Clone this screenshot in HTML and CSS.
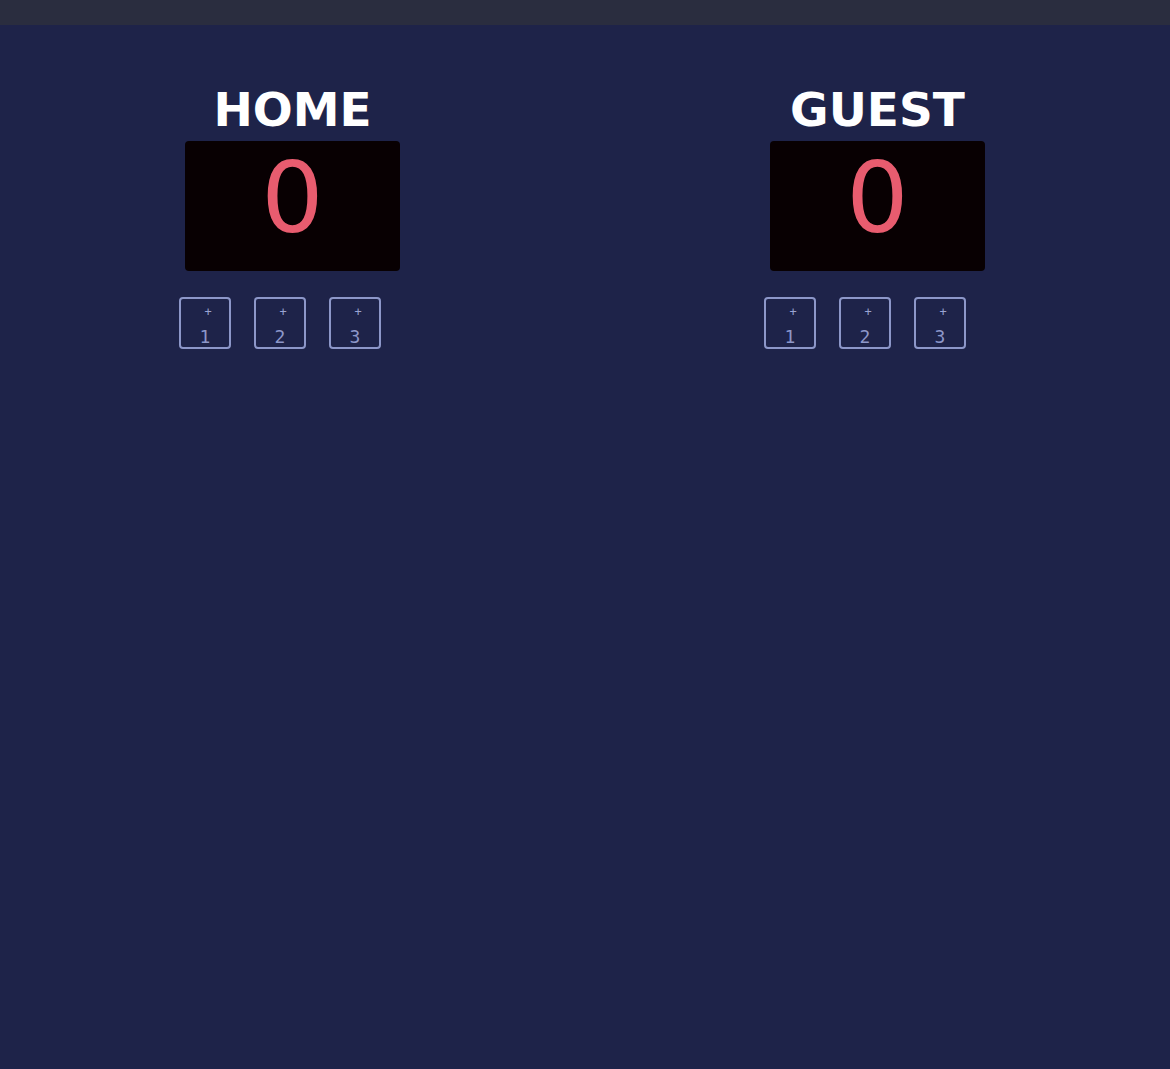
FILE: index.html
```html
<!DOCTYPE html>
<html lang="en">
<head>
<meta charset="utf-8">
<title>Scoreboard</title>
<link rel="stylesheet" href="styles.css">
</head>
<body>
<div class="topbar"></div>
<main class="board">
  <section class="team">
    <h2 class="team-name">HOME</h2>
    <div class="score-box"><span class="score">0</span></div>
    <div class="buttons">
      <button class="add"><span class="plus">+</span><span class="num">1</span></button>
      <button class="add"><span class="plus">+</span><span class="num">2</span></button>
      <button class="add"><span class="plus">+</span><span class="num">3</span></button>
    </div>
  </section>
  <section class="team">
    <h2 class="team-name">GUEST</h2>
    <div class="score-box"><span class="score">0</span></div>
    <div class="buttons">
      <button class="add"><span class="plus">+</span><span class="num">1</span></button>
      <button class="add"><span class="plus">+</span><span class="num">2</span></button>
      <button class="add"><span class="plus">+</span><span class="num">3</span></button>
    </div>
  </section>
</main>
</body>
</html>
```
FILE: styles.css
```css
html, body {
  margin: 0;
  padding: 0;
  height: 100%;
}
body {
  background: #1e2349;
  font-family: "DejaVu Sans", sans-serif;
}
.topbar {
  height: 25px;
  background: #2a2d3f;
}
.board {
  display: grid;
  grid-template-columns: 1fr 1fr;
  padding-top: 57px;
}
.team {
  display: flex;
  flex-direction: column;
  align-items: center;
}
.team-name {
  margin: 0;
  font-size: 47px;
  line-height: 56px;
  font-weight: bold;
  color: #ffffff;
}
.score-box {
  margin-top: 3px;
  width: 215px;
  height: 130px;
  box-sizing: border-box;
  background: #080002;
  border-radius: 4px;
  display: flex;
  justify-content: center;
  padding-top: 8px;
}
.score {
  font-family: "DejaVu Sans", sans-serif;
  font-size: 98px;
  line-height: 98px;
  color: #e85c6f;
}
.buttons {
  display: flex;
  gap: 23px;
  margin-top: 26px;
  padding-right: 25px;
}
.add {
  width: 52px;
  height: 52px;
  box-sizing: border-box;
  border: 2px solid #8d97c9;
  border-radius: 4px;
  background: transparent;
  color: #8d97c9;
  padding: 0;
  display: flex;
  flex-direction: column;
  align-items: center;
  font-family: "DejaVu Sans Mono", monospace;
}
.plus {
  font-size: 12px;
  line-height: 12px;
  margin-top: 7px;
  padding-left: 6px;
  color: #9aa3d3;
}
.num {
  font-size: 18px;
  line-height: 18px;
  margin-top: 10px;
}
```
